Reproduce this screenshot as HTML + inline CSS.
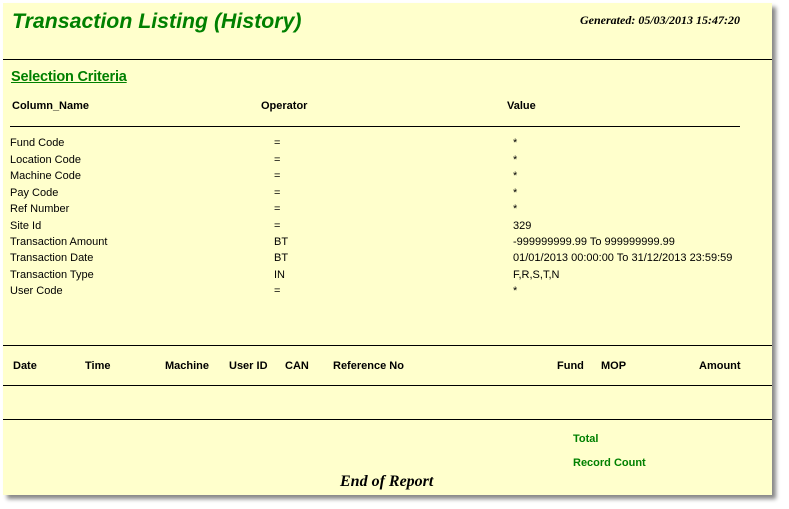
<!DOCTYPE html>
<html><head><style>
body{margin:0;width:789px;height:509px;background:#fff;position:relative;overflow:hidden;font-family:"Liberation Sans",Arial,sans-serif;font-size:11px;color:#000}
#pg{position:absolute;left:3px;top:3px;width:769px;height:492px;background:#ffffcc;box-shadow:4px 4px 4px #888}
.a{position:absolute;white-space:nowrap;line-height:12px}
.b{font-weight:bold}
.g{color:#008000}
.l{position:absolute;height:1px;background:#000}
</style></head><body>
<div id="pg"></div>
<div class="a b g" style="left:12px;top:9px;font-size:21.3px;line-height:24px;font-style:italic">Transaction Listing (History)</div>
<div class="a b" style="left:580px;top:14px;font-family:'Liberation Serif',serif;font-style:italic;font-size:12px">Generated: 05/03/2013 15:47:20</div>
<div class="l" style="left:3px;top:59px;width:769px"></div>
<div class="a b g" style="left:11px;top:69px;font-size:14.5px;line-height:16px;text-decoration:underline;letter-spacing:-0.2px">Selection Criteria</div>
<div class="a b" style="left:12px;top:100px">Column_Name</div>
<div class="a b" style="left:261px;top:100px">Operator</div>
<div class="a b" style="left:507px;top:100px">Value</div>
<div class="l" style="left:10px;top:126px;width:730px"></div>

<div class="a" style="left:10px;top:137px">Fund Code</div><div class="a" style="left:274px;top:137px">=</div><div class="a" style="left:513px;top:137px">*</div>
<div class="a" style="left:10px;top:154px">Location Code</div><div class="a" style="left:274px;top:154px">=</div><div class="a" style="left:513px;top:154px">*</div>
<div class="a" style="left:10px;top:170px">Machine Code</div><div class="a" style="left:274px;top:170px">=</div><div class="a" style="left:513px;top:170px">*</div>
<div class="a" style="left:10px;top:187px">Pay Code</div><div class="a" style="left:274px;top:187px">=</div><div class="a" style="left:513px;top:187px">*</div>
<div class="a" style="left:10px;top:203px">Ref Number</div><div class="a" style="left:274px;top:203px">=</div><div class="a" style="left:513px;top:203px">*</div>
<div class="a" style="left:10px;top:220px">Site Id</div><div class="a" style="left:274px;top:220px">=</div><div class="a" style="left:513px;top:220px">329</div>
<div class="a" style="left:10px;top:236px">Transaction Amount</div><div class="a" style="left:274px;top:236px">BT</div><div class="a" style="left:513px;top:236px">-999999999.99 To 999999999.99</div>
<div class="a" style="left:10px;top:252px">Transaction Date</div><div class="a" style="left:274px;top:252px">BT</div><div class="a" style="left:513px;top:252px">01/01/2013 00:00:00 To 31/12/2013 23:59:59</div>
<div class="a" style="left:10px;top:269px">Transaction Type</div><div class="a" style="left:274px;top:269px">IN</div><div class="a" style="left:513px;top:269px">F,R,S,T,N</div>
<div class="a" style="left:10px;top:285px">User Code</div><div class="a" style="left:274px;top:285px">=</div><div class="a" style="left:513px;top:285px">*</div>

<div class="l" style="left:3px;top:345px;width:769px"></div>
<div class="a b" style="left:13px;top:360px">Date</div>
<div class="a b" style="left:85px;top:360px">Time</div>
<div class="a b" style="left:165px;top:360px">Machine</div>
<div class="a b" style="left:229px;top:360px">User ID</div>
<div class="a b" style="left:285px;top:360px">CAN</div>
<div class="a b" style="left:333px;top:360px">Reference No</div>
<div class="a b" style="left:557px;top:360px">Fund</div>
<div class="a b" style="left:601px;top:360px">MOP</div>
<div class="a b" style="left:699px;top:360px">Amount</div>
<div class="l" style="left:3px;top:385px;width:769px"></div>
<div class="l" style="left:3px;top:419px;width:769px"></div>
<div class="a b g" style="left:573px;top:433px">Total</div>
<div class="a b g" style="left:573px;top:457px">Record Count</div>
<div class="a b" style="left:340px;top:473px;font-family:'Liberation Serif',serif;font-style:italic;font-size:16px;line-height:17px">End of Report</div>
</body></html>
